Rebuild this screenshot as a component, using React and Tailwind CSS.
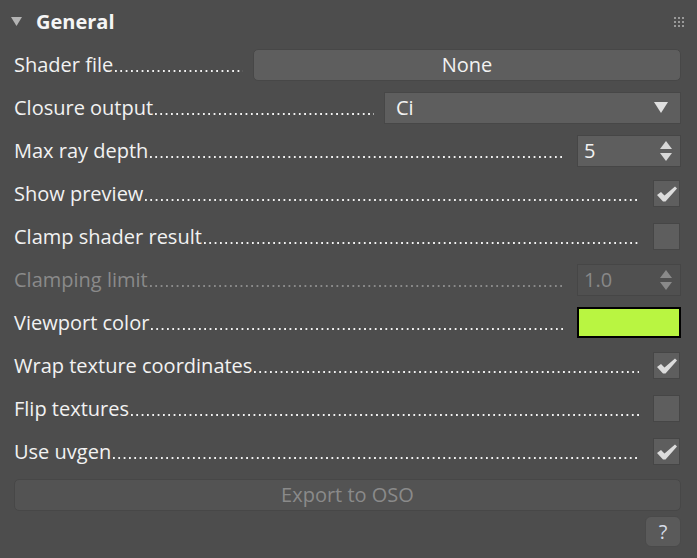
import React from 'react';

// dotted leader drawn as a repeating square dot, sitting on the text baseline
const Leader = ({ disabled }) => (
  <div
    className={`flex-1 min-w-0 h-[2px] mb-[-1px] mr-[2px] bg-[length:5.33px_2px] bg-repeat-x ${
      disabled
        ? 'bg-[linear-gradient(to_right,#8a8a8a_2px,transparent_2px)]'
        : 'bg-[linear-gradient(to_right,#f2f2f2_2px,transparent_2px)]'
    }`}
  />
);

const Label = ({ text, disabled }) => (
  <div className={`flex-1 min-w-0 flex items-baseline whitespace-nowrap ${disabled ? 'text-[#8a8a8a]' : 'text-[#f2f2f2]'}`}>
    <span className="shrink-0 pr-[2px]">{text}</span>
    <Leader disabled={disabled} />
  </div>
);

const Check = () => (
  <svg width="22" height="18" viewBox="0 0 22 18">
    <path d="M1 10 L5 7 L8.5 10.5 L19 1.5 L21 3.5 L9.5 16.5 L7 16.5 Z" fill="#dcdcdc" />
  </svg>
);

const Checkbox = ({ checked }) => (
  <div className="ml-3 mr-[1px] w-[27px] h-[27px] bg-[#5e5e5e] border border-[#464646] flex items-center justify-center">
    {checked && <Check />}
  </div>
);

const Spinner = ({ value, disabled }) => (
  <div className={`ml-[10px] w-[104px] h-[32px] border border-[#464646] flex items-center pl-[6px] pr-[7px] ${disabled ? 'bg-[#505050] text-[#888]' : 'bg-[#5e5e5e] text-[#f2f2f2]'}`}>
    <span className="flex-1">{value}</span>
    <svg width="14" height="22" viewBox="0 0 14 22">
      <path d="M7 1 L13 9 L1 9 Z" fill={disabled ? '#8a8a8a' : '#d8d8d8'} />
      <path d="M1 13 L13 13 L7 21 Z" fill={disabled ? '#8a8a8a' : '#d8d8d8'} />
    </svg>
  </div>
);

const Row = ({ children }) => (
  <div className="h-[43px] flex items-center">{children}</div>
);

export default function App() {
  return (
    <div
      className="w-[697px] h-[558px] bg-[#4d4d4d] text-[20px] leading-none overflow-hidden"
      style={{ fontFamily: '"Open Sans", "Noto Sans", sans-serif' }}
    >
      {/* Header */}
      <div className="h-[43px] flex items-center pl-[11px] pr-[13px]">
        <svg width="11" height="10" viewBox="0 0 11 10">
          <path d="M0 0 L11 0 L5.5 9 Z" fill="#b4b4b4" />
        </svg>
        <span className="ml-[14px] font-bold text-[20px] text-[#f5f5f5] flex-1">General</span>
        <svg width="10" height="10" viewBox="0 0 10 10" fill="#9a9a9a">
          <rect x="0" y="0" width="2" height="2" />
          <rect x="4" y="0" width="2" height="2" />
          <rect x="8" y="0" width="2" height="2" />
          <rect x="0" y="4" width="2" height="2" />
          <rect x="4" y="4" width="2" height="2" />
          <rect x="8" y="4" width="2" height="2" />
          <rect x="0" y="8" width="2" height="2" />
          <rect x="4" y="8" width="2" height="2" />
          <rect x="8" y="8" width="2" height="2" />
        </svg>
      </div>

      <div className="pl-[14px] pr-[16px]">
        <Row>
          <Label text="Shader file" />
          <button className="ml-[8px] w-[428px] h-[32px] bg-[#5e5e5e] border border-[#474747] rounded-[5px] text-[#f2f2f2] flex items-center justify-center">
            None
          </button>
        </Row>
        <Row>
          <Label text="Closure output" />
          <div className="ml-[8px] w-[297px] h-[32px] bg-[#5e5e5e] border border-[#474747] flex items-center pl-[11px] pr-[12px] text-[#f2f2f2]">
            <span className="flex-1">Ci</span>
            <svg width="14" height="11" viewBox="0 0 14 11">
              <path d="M0 0 L14 0 L7 11 Z" fill="#e0e0e0" />
            </svg>
          </div>
        </Row>
        <Row>
          <Label text="Max ray depth" />
          <Spinner value="5" />
        </Row>
        <Row>
          <Label text="Show preview" />
          <Checkbox checked />
        </Row>
        <Row>
          <Label text="Clamp shader result" />
          <Checkbox />
        </Row>
        <Row>
          <Label text="Clamping limit" disabled />
          <Spinner value="1.0" disabled />
        </Row>
        <Row>
          <Label text="Viewport color" />
          <div className="ml-[10px] w-[104px] h-[31px] bg-[#b9f541] border-2 border-black" />
        </Row>
        <Row>
          <Label text="Wrap texture coordinates" />
          <Checkbox checked />
        </Row>
        <Row>
          <Label text="Flip textures" />
          <Checkbox />
        </Row>
        <Row>
          <Label text="Use uvgen" />
          <Checkbox checked />
        </Row>
        <Row>
          <button className="w-full h-[32px] bg-[#535353] border border-[#474747] rounded-[5px] text-[#8a8a8a] flex items-center justify-center">
            Export to OSO
          </button>
        </Row>
        <div className="flex justify-end">
          <button className="w-[36px] h-[31px] bg-[#5a5a5a] border border-[#4a4a4a] rounded-[6px] text-[#d6dce8] flex items-center justify-center">
            ?
          </button>
        </div>
      </div>
    </div>
  );
}
